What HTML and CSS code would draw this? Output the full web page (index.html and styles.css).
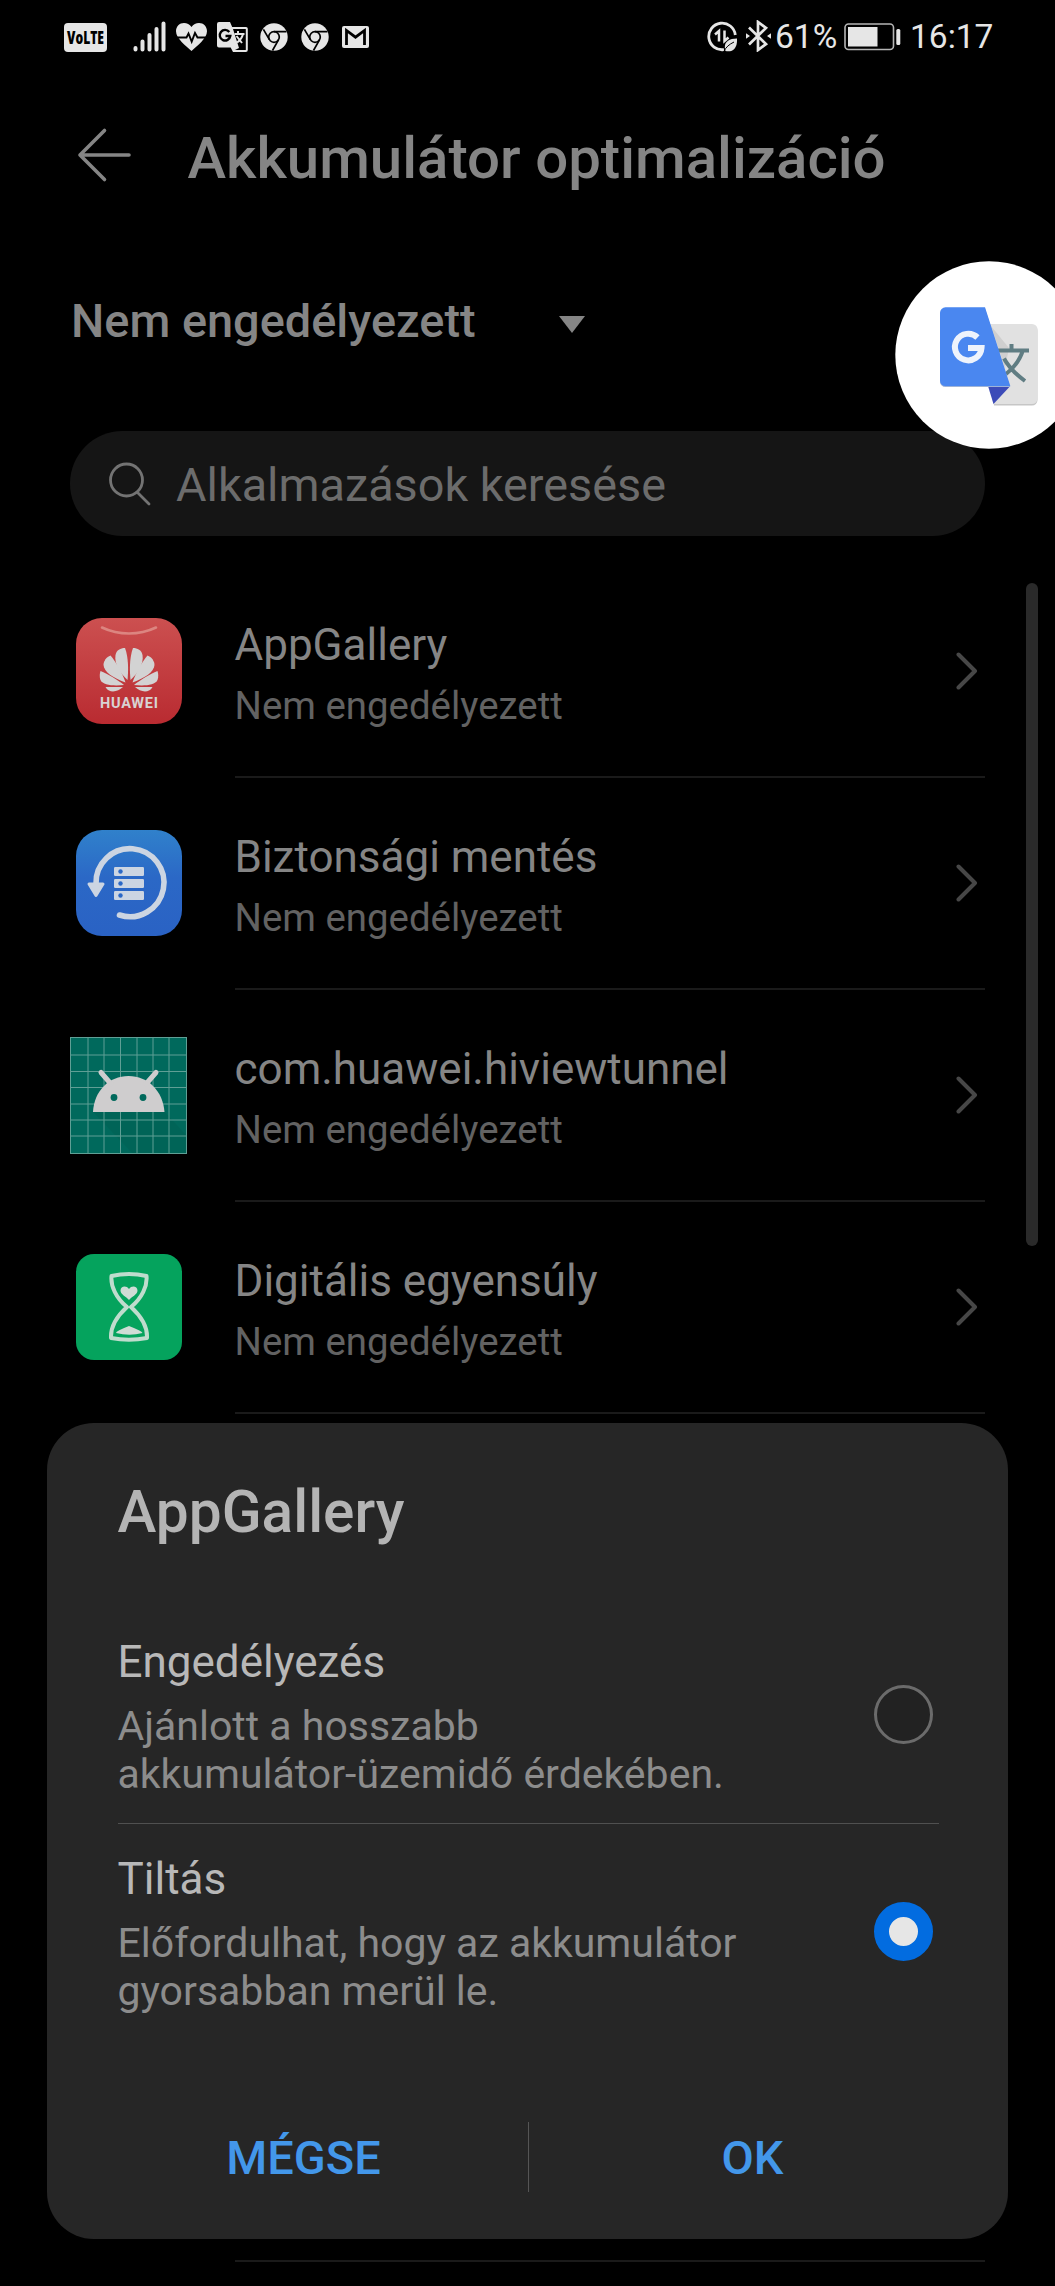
FILE: index.html
```html
<!DOCTYPE html>
<html lang="hu">
<head>
<meta charset="utf-8">
<title>Akkumulátor optimalizáció</title>
<link rel="stylesheet" href="styles.css">
</head>
<body>
<div class="screen">
  <div class="status">
    <div class="status-left">
      <svg class="volte" width="43" height="29" viewBox="0 0 43 29"><rect width="43" height="29" rx="4" fill="#e6e6e6"/><text x="3" y="21" textLength="37" lengthAdjust="spacingAndGlyphs">VoLTE</text></svg>
      <svg class="signal" width="33" height="31" viewBox="0 0 33 31" fill="none" stroke="#e6e6e6" stroke-width="4" stroke-linecap="round"><path d="M2.500 27v1.500M9.500 20.500v8M16.500 14v14.500M23.500 8v20.500M30.500 2.500v26"/></svg>
      <svg class="heart" width="31" height="28" viewBox="0 0 31 28"><path d="M15.500 28C10 23 0 15.500 0 8.300 0 3.500 3.500 0 8 0c3 0 5.700 1.600 7.500 4C17.300 1.600 20 0 23 0c4.500 0 8 3.500 8 8.300C31 15.500 21 23 15.500 28z" fill="#e6e6e6"/><path d="M0 14.500h10.500l2-4 3.200 8.200 3.300-8.700 2.500 4.500H31" fill="none" stroke="#000" stroke-width="1.900"/></svg>
      <svg class="gt" width="31" height="30" viewBox="0 0 31 30"><path d="M2 0h11l2.200 5H29a1.800 1.800 0 0 1 1.800 1.800V28a2 2 0 0 1-2 2H16l-2.300-4.500H2a2 2 0 0 1-2-2V2a2 2 0 0 1 2-2z" fill="#e6e6e6"/><path d="M16 7l6 19-4 2h10.800V7z" fill="#000"/><path d="M12.300 10A5.300 5.300 0 1 0 13.300 14H8.500" fill="none" stroke="#000" stroke-width="2.400"/><path d="M17.500 12h10M21 9v3M26 12c-1 4-3 6.500-6 8.500M19.500 14l5.500 7" fill="none" stroke="#e6e6e6" stroke-width="2"/></svg>
      <svg class="chrome" width="28" height="28" viewBox="0 0 28 28"><circle cx="14" cy="14" r="13.700" fill="#e6e6e6"/><g fill="none" stroke="#000" stroke-width="1.700"><circle cx="14" cy="14" r="5.300"/><path d="M14 8.700h12.500M9.400 16.700L3.400 6.300M18.600 16.700L12.500 27.500"/></g></svg>
      <svg class="chrome" width="28" height="28" viewBox="0 0 28 28"><circle cx="14" cy="14" r="13.700" fill="#e6e6e6"/><g fill="none" stroke="#000" stroke-width="1.700"><circle cx="14" cy="14" r="5.300"/><path d="M14 8.700h12.500M9.400 16.700L3.400 6.300M18.600 16.700L12.500 27.500"/></g></svg>
      <svg class="gmail" width="27" height="22" viewBox="0 0 27 22"><rect width="27" height="22" rx="2" fill="#e6e6e6"/><path d="M4.500 19V4.500l9 6.700 9-6.700V19" fill="none" stroke="#000" stroke-width="2.800"/></svg>
    </div>
    <div class="status-right">
      <svg class="eco" width="31" height="31" viewBox="0 0 31 31"><path d="M17 28.600A13.300 13.300 0 1 1 28.300 14" fill="none" stroke="#e6e6e6" stroke-width="2.800"/><path d="M8 13.500l4-3.500V20.500M17.500 9.500V20l4-3.500" fill="none" stroke="#e6e6e6" stroke-width="2.500"/><path d="M18.500 30c-2.500-8 2-12.500 11.500-12.500C30.500 27 26 31.500 18.500 30z" fill="#e6e6e6"/><path d="M16.500 31C19 26 22 23.500 27 21" stroke="#000" stroke-width="1" fill="none"/></svg>
      <svg class="bt" width="25" height="32" viewBox="0 0 25 32"><path d="M3 7.500l17 16.500-8 6V2l8 6L3 24.500" fill="none" stroke="#e6e6e6" stroke-width="2.700"/><path d="M0 13.300v5.400L4 16zM25 13.300v5.400L21 16z" fill="#e6e6e6"/></svg>
      <span class="pct">61%</span>
      <svg class="battery" width="57" height="28" viewBox="0 0 57 28"><rect x="1" y="1" width="48.500" height="25.500" rx="3.500" fill="none" stroke="#b5b5b5" stroke-width="1.600"/><rect x="4" y="4" width="29.500" height="19.500" fill="#e6e6e6"/><rect x="52.300" y="6" width="4" height="16" rx="1.500" fill="#e6e6e6"/></svg>
      <span class="clock">16:17</span>
    </div>
  </div>

  <header class="header">
    <svg class="back" width="56" height="62" viewBox="0 0 56 62" fill="none" stroke="#858585" stroke-width="3.600" stroke-linecap="round" stroke-linejoin="round"><path d="M52 31H3M27.500 6.500L3 31l24.500 24.500"/></svg>
    <h1>Akkumulátor optimalizáció</h1>
  </header>

  <div class="filter"><span>Nem engedélyezett</span><i class="caret"></i></div>

  <div class="search">
    <svg width="44" height="46" viewBox="0 0 44 46" fill="none" stroke="#737373" stroke-width="2.800" stroke-linecap="round"><circle cx="18.500" cy="19" r="16"/><path d="M29.500 31.500L41 43"/></svg>
    <span>Alkalmazások keresése</span>
  </div>

  <ul class="list">
    <li class="row">
      <div class="icon"><svg width="106" height="106" viewBox="0 0 106 106">
        <defs><linearGradient id="red" x1="0" y1="0" x2="0" y2="1"><stop offset="0" stop-color="#cc5050"/><stop offset="1" stop-color="#b92b31"/></linearGradient></defs>
        <rect width="106" height="106" rx="26" fill="url(#red)"/>
        <path d="M26 9.500c17 8 37 8 54 0" fill="none" stroke="#dc8580" stroke-width="2.600" stroke-linecap="round"/>
        <g fill="#d3d3d3">
          <path d="M51.500 62C44 55 38 46 39.500 37c1-5 5-7 9.500-7 3.500 9 3.500 22 2.500 32z"/>
          <path d="M54.500 62C62 55 68 46 66.500 37c-1-5-5-7-9.500-7-3.500 9-3.500 22-2.500 32z"/>
          <path d="M49.500 64.500C37 60 28 54 27.500 47c0-4 3-8 7-9.500 6 7 12 18 15 27z"/>
          <path d="M56.500 64.500C69 60 78 54 78.500 47c0-4-3-8-7-9.500-6 7-12 18-15 27z"/>
          <path d="M48 67c-10 1-21 .5-23.500-5-1.200-3-.8-6.500 0-9C32 56 42 62 48 67z"/>
          <path d="M58 67c10 1 21 .5 23.500-5 1.200-3 .8-6.500 0-9C74 56 64 62 58 67z"/>
          <path d="M47 69c-4 4-10 5.500-14 3.500-2-1-3-2.500-3.500-3.500z"/>
          <path d="M59 69c4 4 10 5.500 14 3.500 2-1 3-2.500 3.500-3.500z"/>
        </g>
        <text x="53" y="89.500" text-anchor="middle" textLength="58" class="brand">HUAWEI</text>
      </svg></div>
      <div class="body"><div><p class="name">AppGallery</p><p class="sub">Nem engedélyezett</p></div><svg class="chev" viewBox="0 0 22 38"><path d="M2.500 2.500L19 19 2.500 35.500"/></svg></div>
    </li>
    <li class="row">
      <div class="icon"><svg width="106" height="106" viewBox="0 0 106 106">
        <defs><linearGradient id="blue" x1="0" y1="0" x2="0" y2="1"><stop offset="0" stop-color="#3081cb"/><stop offset=".45" stop-color="#2b68c6"/><stop offset="1" stop-color="#2a62c4"/></linearGradient></defs>
        <rect width="106" height="106" rx="26" fill="url(#blue)"/>
        <path d="M20 54A34 34 0 1 1 43.500 85" fill="none" stroke="#ccd5e2" stroke-width="5.600" stroke-linecap="round"/>
        <path d="M13 54h14L20 65.500z" fill="#ccd5e2" stroke="#ccd5e2" stroke-width="3" stroke-linejoin="round"/>
        <g fill="#ccd5e2"><rect x="38" y="37" width="30" height="9" rx="1.200"/><rect x="38" y="49" width="30" height="9" rx="1.200"/><rect x="38" y="61" width="30" height="9" rx="1.200"/></g>
        <g fill="#2b68c6"><circle cx="44.500" cy="41.500" r="2.200"/><circle cx="44.500" cy="53.500" r="2.200"/><circle cx="44.500" cy="65.500" r="2.200"/></g>
      </svg></div>
      <div class="body"><div><p class="name">Biztonsági mentés</p><p class="sub">Nem engedélyezett</p></div><svg class="chev" viewBox="0 0 22 38"><path d="M2.500 2.500L19 19 2.500 35.500"/></svg></div>
    </li>
    <li class="row">
      <div class="icon"><svg width="117" height="117" viewBox="0 0 117 117">
        <rect width="117" height="117" fill="#00695c"/>
        <path d="M23 75l40 42h54V99L94 74z" fill="#006154" opacity=".55"/>
        <path d="M.5 0v117M18 0v117M34 0v117M50.500 0v117M67 0v117M83 0v117M99 0v117M116.500 0v117M0 .5h117M0 18h117M0 34.500h117M0 50.500h117M0 67h117M0 83h117M0 99h117M0 116.500h117" stroke="#5f9f95" stroke-width="1"/>
        <path d="M23 75C24 54 39 39 58.500 39S93 54 94.500 75z" fill="#cfcdce"/>
        <path d="M31 35.500L41 47M86 35.500L76 47" stroke="#cfcdce" stroke-width="5" stroke-linecap="round"/>
        <circle cx="44" cy="60.500" r="3.400" fill="#00695c"/><circle cx="73" cy="60.500" r="3.400" fill="#00695c"/>
      </svg></div>
      <div class="body"><div><p class="name">com.huawei.hiviewtunnel</p><p class="sub">Nem engedélyezett</p></div><svg class="chev" viewBox="0 0 22 38"><path d="M2.500 2.500L19 19 2.500 35.500"/></svg></div>
    </li>
    <li class="row">
      <div class="icon"><svg width="106" height="106" viewBox="0 0 106 106">
        <rect width="106" height="106" rx="18" fill="#05a35d"/>
        <path d="M35.500 22q17.500-4 35 0C71.500 32 66 44 55 53 66 63 71.500 74 71 84q-18 3.500-36 0C34.500 74 40 63 51 53 40 44 34.500 32 35.500 22z" fill="none" stroke="#bfdccd" stroke-width="4" stroke-linejoin="round"/>
        <path d="M53 46c-3-3.500-8.500-5.500-8.500-9.500 0-4.500 6-5.500 8.500-1.500 2.500-4 8.500-3 8.500 1.500 0 4-5.500 6-8.500 9.500zM40 79q0-2 13-7 13 5 13.500 7-13 3.500-26.500 0z" fill="#cfdcd5"/>
      </svg></div>
      <div class="body"><div><p class="name">Digitális egyensúly</p><p class="sub">Nem engedélyezett</p></div><svg class="chev" viewBox="0 0 22 38"><path d="M2.500 2.500L19 19 2.500 35.500"/></svg></div>
    </li>
    <li class="row"><div class="icon"></div><div class="body"></div></li>
    <li class="row"><div class="icon"></div><div class="body"></div></li>
    <li class="row"><div class="icon"></div><div class="body"></div></li>
    <li class="row"><div class="icon"></div><div class="body"></div></li>
  </ul>

  <div class="scrollbar"></div>

  <svg class="bubble" width="188" height="188" viewBox="895 261 188 188">
    <circle cx="989" cy="355" r="93.700" fill="#fff"/>
    <path d="M985 325h47a5.500 5.500 0 0 1 5.500 5.500v69.500a5.500 5.500 0 0 1-5.500 5.500h-38z" fill="#c6c6c6"/>
    <path d="M985 324h47a5.500 5.500 0 0 1 5.500 5.500v69a5.500 5.500 0 0 1-5.500 5.500h-38z" fill="#e1e1e1"/>
    <path d="M991 326l18 22-4 20z" fill="#cfcfcf"/>
    <path d="M998 350.500h31M1011.500 344v6M1023 350c-3 10-8 17-17 24M1004 358.500c5 9 12 16 21 22.500" fill="none" stroke="#607d83" stroke-width="4"/>
    <path d="M988 386h22.300l-16.800 18z" fill="#3c4bb8"/>
    <path d="M946 308.500h39l25 78.500h-64.500a5.500 5.500 0 0 1-5.500-5.500v-67.500z" fill="#9eb3d8"/>
    <path d="M945.500 307.300H985l25.300 78.700h-64.800a5.500 5.500 0 0 1-5.500-5.500v-67.700a5.500 5.500 0 0 1 5.500-5.500z" fill="#4a87f0"/>
    <path d="M977.500 337.500A13.300 13.300 0 1 0 981.500 348H968" fill="none" stroke="#eef3fc" stroke-width="6"/>
  </svg>

  <section class="dialog">
    <h2>AppGallery</h2>
    <div class="option">
      <div><p class="opt-name">Engedélyezés</p><p class="opt-desc">Ajánlott a hosszabb<br>akkumulátor-üzemidő érdekében.</p></div>
      <span class="radio"></span>
    </div>
    <div class="option">
      <div><p class="opt-name">Tiltás</p><p class="opt-desc">Előfordulhat, hogy az akkumulátor<br>gyorsabban merül le.</p></div>
      <span class="radio on"></span>
    </div>
    <div class="actions"><button>MÉGSE</button><button>OK</button></div>
  </section>
</div>
</body>
</html>
```
FILE: styles.css
```css
* { box-sizing: border-box; margin: 0; padding: 0; }
body { background: #000; font-family: Roboto, "Liberation Sans", sans-serif; }
svg { display: block; flex: none; }
.screen { position: relative; width: 1055px; height: 2286px; overflow: hidden; background: #000; }

.status { display: flex; justify-content: space-between; height: 80px; padding: 0 64px; color: #e6e6e6; }
.status-left, .status-right { display: flex; align-items: flex-start; }
.volte { margin-top: 22.500px; overflow: visible; font: 800 18px "Open Sans", sans-serif; fill: #000; }
.signal { margin: 21px 0 0 26px; }
.heart { margin: 23px 0 0 10px; }
.gt { margin: 22px 0 0 10px; }
.chrome { margin: 23px 0 0 12px; }
.chrome + .chrome { margin-left: 13px; }
.gmail { margin: 26px 0 0 13px; }
.eco { margin-top: 21px; }
.bt { margin: 20px 0 0 8px; }
.pct, .clock { font-size: 33.500px; line-height: 40px; margin-top: 17px; white-space: nowrap; }
.pct { width: 72px; padding-left: 4px; }
.battery { margin: 23px 0 0 1px; }
.clock { width: 81px; margin-left: 9px; }

.header { display: flex; align-items: center; height: 150px; padding: 0 76.500px; gap: 55px; }
h1 { font-size: 58.200px; font-weight: 500; line-height: 70px; color: #858585; white-space: nowrap; margin-top: 6px; }
.filter { display: flex; align-items: center; height: 70px; margin-top: 56px; padding: 0 71px; gap: 83px; color: #858585; font-size: 46.900px; font-weight: 500; line-height: 56px; }
.caret { border: 13px solid transparent; border-top: 17px solid #858585; border-bottom: 0; margin-top: 7px; }
.search { display: flex; align-items: center; gap: 24px; height: 105px; margin: 75px 70px 0; padding-left: 38px; border-radius: 53px; background: #151515; color: #6c6c6c; font-size: 46.800px; line-height: 56px; white-space: nowrap; }
.search span { margin-top: 2px; }

.list { list-style: none; margin: 30px 70px 0; }
.row { display: flex; height: 212px; }
.icon { width: 164.500px; height: 210px; flex: none; display: flex; align-items: center; justify-content: center; padding-right: 47px; }
.brand { font: 700 14.500px Roboto, sans-serif; fill: #d8d3d3; }
.body { flex: 1; display: flex; align-items: center; justify-content: space-between; border-bottom: 2px solid #1a1a1a; }
.name { font-size: 44px; line-height: 52px; color: #858585; margin-top: 5px; }
.sub { font-size: 38.400px; line-height: 46px; color: #626262; margin-top: 12px; }
.chev { width: 22px; height: 38px; margin-right: 7px; fill: none; stroke: #474747; stroke-width: 4; stroke-linecap: round; stroke-linejoin: round; }
.scrollbar { position: absolute; left: 1026px; top: 583px; width: 11.500px; height: 663px; border-radius: 6px; background: #2a2a2a; }
.bubble { position: absolute; left: 895px; top: 261px; }

.dialog { position: absolute; left: 47px; top: 1422.500px; width: 961px; height: 816.500px; border-radius: 47px; background: #262626; padding: 54.500px 69.500px 0 70.500px; }
h2 { font-size: 58.600px; font-weight: 500; line-height: 70px; color: #b4b4b4; margin-bottom: 59px; }
.option { display: flex; align-items: center; justify-content: space-between; height: 217px; padding: 4.500px 6px 0 0; white-space: nowrap; }
.option + .option { border-top: 1px solid #505050; }
.opt-name { font-size: 44px; line-height: 52px; color: #b8b8b8; margin-bottom: 14px; }
.opt-desc { font-size: 41px; line-height: 48px; color: #8c8c8c; }
.radio { width: 59px; height: 59px; border-radius: 50%; border: 3px solid #6b6b6b; flex: none; margin-top: -4px; background: #222; }
.radio.on { border: 15px solid #026ce0; background: #e6e6e6; margin-top: -6px; }
.actions { display: flex; height: 70px; margin: 82px -38px 0; }
button { flex: 1; border: 0; background: none; font: 500 46.900px/68px Roboto, sans-serif; color: #4397ea; padding-top: 2px; }
button + button { border-left: 1px solid #555; }
```
